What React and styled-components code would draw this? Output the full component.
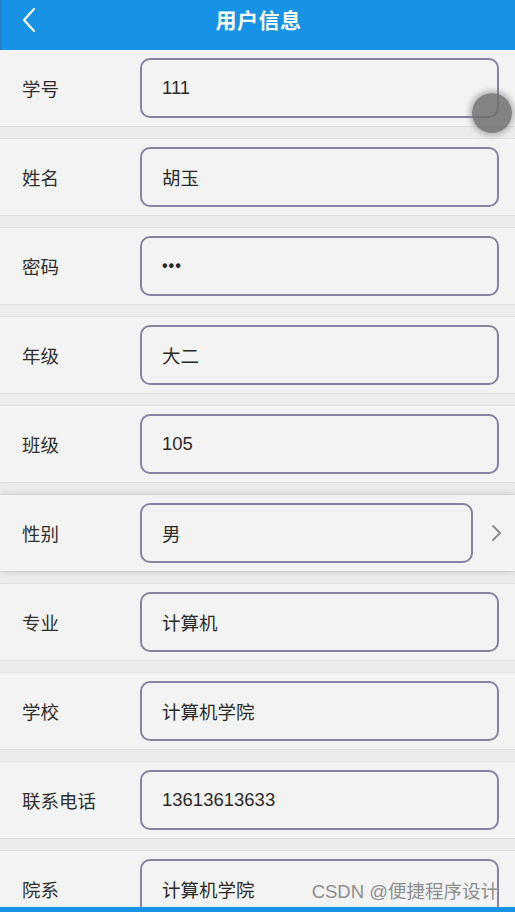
import React from 'react'
import styled, { createGlobalStyle, css } from 'styled-components'

const GlobalStyle = createGlobalStyle`
  html, body {
    margin: 0;
    padding: 0;
    background: #f3f3f3;
  }
  body {
    font-family: "Liberation Sans", "Noto Sans CJK SC", sans-serif;
  }
`

const Page = styled.div`
  position: relative;
  width: 515px;
  height: 912px;
  overflow: hidden;
  background: #f3f3f3;
`
const Header = styled.header`
  display: flex;
  align-items: center;
  justify-content: center;
  position: relative;
  height: 50px;
  background: #1793e6;
  border-left: 2px solid #2a7fc0;
`
const Back = styled.button`
  position: absolute;
  left: 16px;
  top: 6px;
  width: 24px;
  height: 28px;
  padding: 0;
  border: none;
  background: none;
`
const Title = styled.h1`
  margin: 0 0 12px;
  color: #fff;
  font-size: 21px;
  font-weight: bold;
  letter-spacing: 0.5px;
`
const List = styled.div`
  display: flex;
  flex-direction: column;
`
const Row = styled.div`
  display: flex;
  align-items: center;
  height: 76px;
  padding: 0 16px 0 22px;
  background: #f3f3f3;
  ${props =>
    props.raised &&
    css`
      position: relative;
      z-index: 1;
      padding-right: 12px;
      box-shadow: 0 0 8px rgba(0, 0, 0, 0.16);
    `}
`
const Gap = styled.div`
  height: 11px;
  background: #ececec;
  border-top: 1px solid #dddddd;
  border-bottom: 1px solid #e2e2e2;
`
const Label = styled.span`
  width: 118px;
  flex-shrink: 0;
  color: #2f2f2f;
  font-size: 18.5px;
`
const Field = styled.div`
  display: flex;
  align-items: center;
  flex: 1;
  height: 60px;
  box-sizing: border-box;
  padding-left: 20px;
  border: 2px solid #86829f;
  border-radius: 10px;
  background: #f3f3f3;
  color: #2a2a2a;
  font-size: 18.5px;
`
const Dots = styled.span`
  font-size: 16px;
  font-weight: bold;
  letter-spacing: 1px;
`
const Arrow = styled.span`
  display: flex;
  width: 30px;
  justify-content: flex-end;
`
const Touch = styled.div`
  position: absolute;
  left: 472px;
  top: 93px;
  width: 40px;
  height: 40px;
  border-radius: 50%;
  background: rgba(110, 110, 110, 0.85);
  box-shadow: 0 0 5px 3px rgba(120, 120, 120, 0.45);
`
const Watermark = styled.div`
  position: absolute;
  right: 16px;
  bottom: 9px;
  color: #8e8e8e;
  font-size: 18.5px;
`
const BottomBar = styled.div`
  position: absolute;
  left: 0;
  right: 0;
  bottom: 0;
  height: 5px;
  background: #1793e6;
`

const fields = [
  { label: '学号', value: '111' },
  { label: '姓名', value: '胡玉' },
  { label: '密码', value: '•••', secret: true },
  { label: '年级', value: '大二' },
  { label: '班级', value: '105' },
  { label: '性别', value: '男', select: true },
  { label: '专业', value: '计算机' },
  { label: '学校', value: '计算机学院' },
  { label: '联系电话', value: '13613613633' },
  { label: '院系', value: '计算机学院' },
]

const App = () => {
  return (
    <Page>
      <GlobalStyle />
      <Header>
        <Back aria-label='返回'>
          <svg width='24' height='28' viewBox='0 0 24 28'>
            <path d='M16 3 L6 14 L16 25' fill='none' stroke='#fff' strokeWidth='2.2' strokeLinecap='round' strokeLinejoin='round' />
          </svg>
        </Back>
        <Title>用户信息</Title>
      </Header>
      <List>
        {fields.map((f, i) => (
          <React.Fragment key={f.label}>
            {i > 0 && <Gap />}
            <Row raised={f.select}>
              <Label>{f.label}</Label>
              <Field>{f.secret ? <Dots>{f.value}</Dots> : f.value}</Field>
              {f.select && (
                <Arrow>
                  <svg width='12' height='20' viewBox='0 0 12 20'>
                    <path d='M2 3 L9 10 L2 17' fill='none' stroke='#8a8a8a' strokeWidth='2' strokeLinecap='round' strokeLinejoin='round' />
                  </svg>
                </Arrow>
              )}
            </Row>
          </React.Fragment>
        ))}
      </List>
      <Touch />
      <Watermark>CSDN @便捷程序设计</Watermark>
      <BottomBar />
    </Page>
  )
}

export default App
